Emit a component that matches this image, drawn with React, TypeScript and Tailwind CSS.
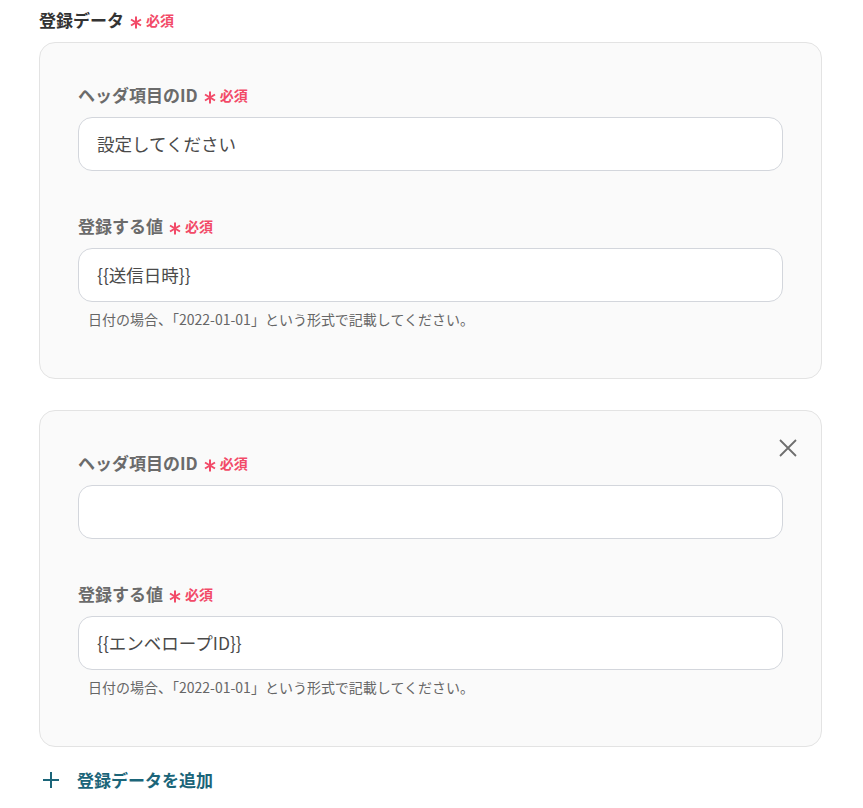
import React from "react";

const font = { fontFamily: '"Noto Sans CJK JP", "Noto Sans", sans-serif' };

function Req() {
  return (
    <span className="ml-[6px] inline-flex items-center gap-[4px] text-[#f24a68]">
      <svg width="12" height="13" viewBox="0 0 12 13" fill="none" stroke="currentColor" strokeWidth="2" className="translate-y-[2px]">
        <path d="M6 0.5V12.5M1 3.5L11 9.5M11 3.5L1 9.5" />
      </svg>
      <span className="text-[14px] font-bold">必須</span>
    </span>
  );
}

function Field({ label, value, help }: { label: string; value: string; help?: boolean }) {
  return (
    <div>
      <div className="flex items-center h-[26px] text-[17px] font-bold text-[#6b6b6b]">
        {label}
        <Req />
      </div>
      <div className="mt-[9px] h-[54px] rounded-[14px] border border-[#d3d6dc] bg-white flex items-center px-[18px] text-[17.5px] text-[#4a4a4a]">
        {value}
      </div>
      {help && (
        <div className="mt-[7px] pl-[10px] text-[14px] leading-[20px] text-[#666]">
          日付の場合、「2022-01-01」という形式で記載してください。
        </div>
      )}
    </div>
  );
}

function Card({ first, second, close }: { first: string; second: string; close?: boolean }) {
  return (
    <div className="relative rounded-[16px] border border-[#e3e3e3] bg-[#fafafa] pl-[38px] pr-[38px] pt-[39px] pb-[49px]">
      {close && (
        <button className="absolute right-[22px] top-[26px] text-[#6e6e6e]">
          <svg width="22" height="22" viewBox="0 0 22 22" fill="none" stroke="currentColor" strokeWidth="1.8">
            <path d="M3 3L19 19M19 3L3 19" />
          </svg>
        </button>
      )}
      <Field label="ヘッダ項目のID" value={first} />
      <div className="mt-[42px]">
        <Field label="登録する値" value={second} help />
      </div>
    </div>
  );
}

export default function App() {
  return (
    <div style={font} className="w-[863px] h-[808px] bg-white pl-[39px] pr-[41px] pt-[7px]">
      <div className="flex items-center h-[26px] text-[17px] font-bold text-[#333]">
        登録データ
        <Req />
      </div>
      <div className="mt-[9px]">
        <Card first="設定してください" second="{{送信日時}}" />
      </div>
      <div className="mt-[31px]">
        <Card first="" second="{{エンベロープID}}" close />
      </div>
      <button className="mt-[20px] flex items-center h-[26px] text-[17px] font-bold text-[#1b6579]">
        <svg width="18" height="18" viewBox="0 0 18 18" fill="none" stroke="currentColor" strokeWidth="2" className="ml-[3px]">
          <path d="M9 1V17M1 9H17" />
        </svg>
        <span className="ml-[17px]">登録データを追加</span>
      </button>
    </div>
  );
}
